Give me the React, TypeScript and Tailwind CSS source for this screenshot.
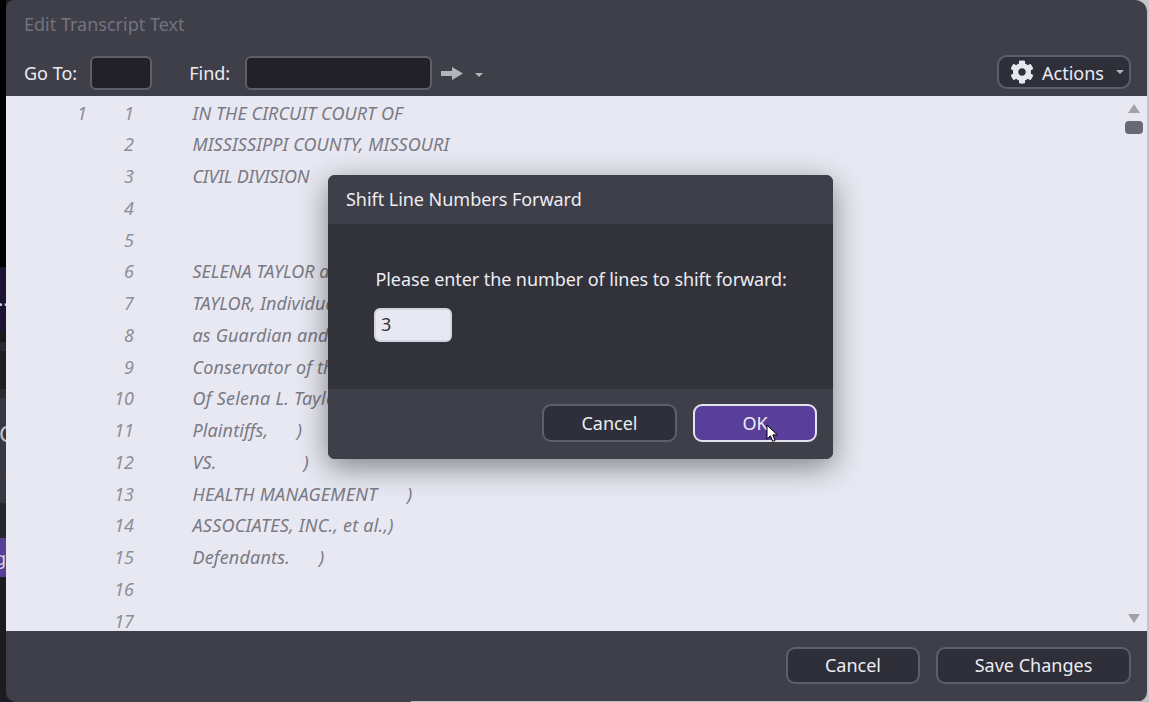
import { FaCog } from "react-icons/fa";

const rows: { page: string; line: string; text: string; track: string }[] = [
  { page: "1", line: "1", text: "IN THE CIRCUIT COURT OF", track: "tracking-[0.08px]" },
  { page: "", line: "2", text: "MISSISSIPPI COUNTY, MISSOURI", track: "tracking-[0.07px]" },
  { page: "", line: "3", text: "CIVIL DIVISION", track: "tracking-[-0.2px]" },
  { page: "", line: "4", text: "", track: "" },
  { page: "", line: "5", text: "", track: "" },
  { page: "", line: "6", text: "SELENA TAYLOR and", track: "" },
  { page: "", line: "7", text: "TAYLOR, Individually", track: "" },
  { page: "", line: "8", text: "as Guardian and", track: "tracking-[0.15px]" },
  { page: "", line: "9", text: "Conservator of the", track: "tracking-[0.15px]" },
  { page: "", line: "10", text: "Of Selena L. Taylor", track: "tracking-[0.25px]" },
  { page: "", line: "11", text: "Plaintiffs,      )", track: "tracking-[0.1px]" },
  { page: "", line: "12", text: "VS.                  )", track: "tracking-[0.15px]" },
  { page: "", line: "13", text: "HEALTH MANAGEMENT      )", track: "tracking-[0.25px]" },
  { page: "", line: "14", text: "ASSOCIATES, INC., et al.,)", track: "tracking-[0.22px]" },
  { page: "", line: "15", text: "Defendants.      )", track: "tracking-[0.17px]" },
  { page: "", line: "16", text: "", track: "" },
  { page: "", line: "17", text: "", track: "" },
];

function Caret() {
  return <span className="h-0 w-0 border-x-[4px] border-t-[4px] border-x-transparent border-t-[#b4b4bc]" />;
}

function DarkButton({ label, className }: { label: string; className: string }) {
  return (
    <button
      type="button"
      className={`flex items-center justify-center rounded-[9px] border-2 border-[#5f5f6b] bg-[#2f2f39] text-[18px] text-[#ececf2] ${className}`}
    >
      {label}
    </button>
  );
}

// bits of the app behind the modal that peek out on the left
function LeftStrip() {
  return (
    <div className="relative flex w-[6px] shrink-0 flex-col overflow-hidden bg-black">
      <div className="h-[267px] shrink-0 bg-black" />
      <div className="h-[63px] shrink-0 bg-[#1d1433]" />
      <div className="h-[12px] shrink-0 bg-[#17171c]" />
      <div className="h-[9px] shrink-0 bg-[#2a2a30]" />
      <div className="h-[38px] shrink-0 bg-[#1d1d22]" />
      <div className="h-[9px] shrink-0 bg-[#2a2a30]" />
      <div className="h-[105px] shrink-0 bg-[#383842]" />
      <div className="h-[35px] shrink-0 bg-[#26262e]" />
      <div className="h-[39px] shrink-0 bg-[#593f98]" />
      <div className="flex-1 bg-[#1c1c20]" />
      <span className="absolute -left-[8px] top-[212px] text-[20px] leading-[26px] text-[#a0a0a0]">1</span>
      <span className="absolute -left-[2px] top-[286px] text-[20px] leading-[26px] tracking-[0px] text-[#d8d8e0]">..</span>
      <span className="absolute -left-[1px] top-[420px] text-[22px] leading-[26px] text-[#c4c4cc]">C</span>
      <span className="absolute -left-[4px] top-[458px] text-[20px] leading-[26px] text-[#c4c4cc]">,</span>
      <span className="absolute -left-[5px] top-[546px] text-[18px] leading-[24px] text-[#d8d8e0]">g</span>
    </div>
  );
}

export default function App() {
  return (
    <div className="relative flex h-[702px] w-[1149px] overflow-hidden bg-black font-['Noto_Sans',sans-serif]">
      <LeftStrip />

      <div className="flex flex-1 bg-[linear-gradient(90deg,#1c1c20_50%,#c4c4c8_50%)] pr-[2px]">
        <div className="flex w-[1141px] shrink-0 flex-col overflow-hidden rounded-tl-[8px] rounded-tr-[12px] rounded-b-[10px] bg-[#3f3f49]">
          <div className="h-[48px] shrink-0 px-[18px] pt-[11px] text-[18px] leading-[26px] text-[#73737f]">
            Edit Transcript Text
          </div>

          <div className="flex h-[48px] shrink-0 items-start pl-[18px] pr-[16px] pt-[7px]">
            <span className="mt-[5px] text-[18px] leading-[26px] text-[#ececf2]">Go To:</span>
            <div className="ml-[13px] mt-[1px] h-[34px] w-[62px] rounded-[6px] border-2 border-[#5f5f6b] bg-[#212127]" />
            <span className="ml-[37px] mt-[5px] text-[18px] leading-[26px] text-[#ececf2]">Find:</span>
            <div className="ml-[15px] mt-[1px] h-[34px] w-[187px] rounded-[6px] border-2 border-[#5f5f6b] bg-[#212127]" />
            <svg viewBox="0 0 22 13" className="ml-[9px] mt-[12px] h-[13px] w-[22px]">
              <path d="M0 4h11V0l11 6.5L11 13V9H0z" fill="#b4b4bc" />
            </svg>
            <span className="ml-[12px] mt-[18px] flex">
              <Caret />
            </span>
            <button
              type="button"
              className="ml-auto flex h-[34px] w-[134px] items-center rounded-[10px] border-2 border-[#5f5f6b] bg-[#2f2f39] pl-[11px] text-[18px] text-[#ececf2]"
            >
              <FaCog className="h-[24px] w-[24px] text-[#e6e6ee]" />
              <span className="ml-[8px] mt-[2px]">Actions</span>
              <span className="ml-[12px] flex">
                <Caret />
              </span>
            </button>
          </div>

          <div className="flex h-[535px] shrink-0 overflow-hidden bg-[#e8e8f2]">
            <div className="flex-1 pt-[0.85px]">
              {rows.map((row) => (
                <div key={row.line} className="flex h-[31.75px] items-center text-[18px] italic leading-[20px] text-[#7a7a84]">
                  <span className="w-[81px] text-right text-[#8e8e96]">{row.page}</span>
                  <span className="w-[47px] text-right text-[#8e8e96]">{row.line}</span>
                  <span className={`ml-[58.5px] whitespace-pre ${row.track}`}>{row.text}</span>
                </div>
              ))}
            </div>
            <div className="flex w-[26px] shrink-0 flex-col items-center py-[8px] pr-[1px]">
              <span className="h-0 w-0 border-x-[6px] border-b-[9px] border-x-transparent border-b-[#a2a2a6]" />
              <span className="mt-[8px] h-[13px] w-[18px] rounded-[4px] bg-[#696974]" />
              <span className="mt-auto h-0 w-0 border-x-[6px] border-t-[9px] border-x-transparent border-t-[#a2a2a6]" />
            </div>
          </div>

          <div className="flex flex-1 items-start justify-end gap-[16px] pr-[16px] pt-[16px]">
            <DarkButton label="Cancel" className="h-[37px] w-[134px] pb-[1px]" />
            <DarkButton label="Save Changes" className="h-[37px] w-[195px] pb-[1px]" />
          </div>
        </div>
      </div>

      {/* thin light edge of whatever sits under the window */}
      <div className="absolute bottom-0 left-[411px] right-0 h-[1px] bg-[#b8b8bc]" />

      <div className="absolute left-[328px] top-[175px] flex h-[284px] w-[505px] flex-col overflow-hidden rounded-[7px] bg-[#32323b] shadow-[0_8px_30px_rgba(0,0,0,0.45)]">
        <div className="h-[49px] shrink-0 bg-[#3f3f49] px-[18px] pt-[11px] text-[18px] leading-[26px] tracking-[-0.04px] text-[#ececf2]">
          Shift Line Numbers Forward
        </div>
        <div className="flex-1 pl-[46px] pt-[42px]">
          <p className="h-[26px] pl-[1.5px] text-[18px] leading-[26px] tracking-[-0.08px] text-[#ececf2]">
            Please enter the number of lines to shift forward:
          </p>
          <div className="mt-[16px] flex h-[34px] w-[78px] items-center rounded-[6px] border-2 border-[#d4d4e0] bg-[#e8e8f2] pb-[1px] pl-[5px] text-[18px] text-[#33333b]">
            3
          </div>
        </div>
        <div className="flex h-[70px] shrink-0 items-start justify-end gap-[16px] bg-[#3f3f49] pr-[16px] pt-[15px]">
          <DarkButton label="Cancel" className="h-[38px] w-[135px]" />
          <button
            type="button"
            className="relative flex h-[38px] w-[124px] items-center justify-center rounded-[9px] border-2 border-[#e4e4ee] bg-[#5a3f9a] text-[18px] text-[#ececf2]"
          >
            OK
            <svg viewBox="0 0 12 19" className="absolute left-[71px] top-[18px] h-[19px] w-[12px]">
              <path d="M1 1v14l3.4-3.2 2.3 5.6 2.4-1-2.3-5.5h4.6z" fill="#fff" stroke="#000" strokeWidth="1" />
            </svg>
          </button>
        </div>
      </div>
    </div>
  );
}
